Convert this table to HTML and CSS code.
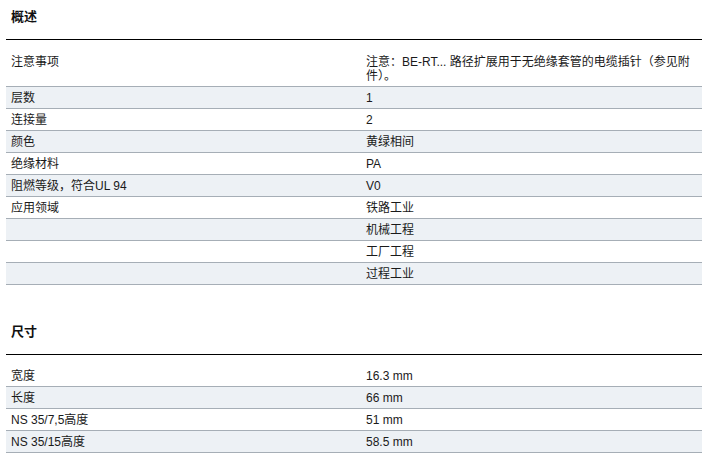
FILE: index.html
```html
<!DOCTYPE html>
<html lang="zh-CN">
<head>
<meta charset="utf-8">
<title>技术数据</title>
<link rel="stylesheet" href="styles.css">
</head>
<body>
<div class="page">
  <section class="section">
    <h2 class="section-title">概述</h2>
    <div class="table">
      <div class="row first">
        <div class="cell">注意事项</div>
        <div class="cell">注意：BE-RT... 路径扩展用于无绝缘套管的电缆插针（参见附件）。</div>
      </div>
      <div class="row alt"><div class="cell">层数</div><div class="cell">1</div></div>
      <div class="row"><div class="cell">连接量</div><div class="cell">2</div></div>
      <div class="row alt"><div class="cell">颜色</div><div class="cell">黄绿相间</div></div>
      <div class="row"><div class="cell">绝缘材料</div><div class="cell">PA</div></div>
      <div class="row alt"><div class="cell">阻燃等级，符合UL 94</div><div class="cell">V0</div></div>
      <div class="row"><div class="cell">应用领域</div><div class="cell">铁路工业</div></div>
      <div class="row alt"><div class="cell"></div><div class="cell">机械工程</div></div>
      <div class="row"><div class="cell"></div><div class="cell">工厂工程</div></div>
      <div class="row alt"><div class="cell"></div><div class="cell">过程工业</div></div>
    </div>
  </section>
  <section class="section second">
    <h2 class="section-title">尺寸</h2>
    <div class="table">
      <div class="row first"><div class="cell">宽度</div><div class="cell">16.3 mm</div></div>
      <div class="row alt"><div class="cell">长度</div><div class="cell">66 mm</div></div>
      <div class="row"><div class="cell">NS 35/7,5高度</div><div class="cell">51 mm</div></div>
      <div class="row alt"><div class="cell">NS 35/15高度</div><div class="cell">58.5 mm</div></div>
    </div>
  </section>
</div>
</body>
</html>
```

FILE: styles.css
```css
html, body {
  margin: 0;
  padding: 0;
  background: #ffffff;
}

body {
  font-family: "Liberation Sans", Arial, "Noto Sans CJK SC", sans-serif;
  font-size: 12px;
  color: #1a1a1a;
}

.page {
  padding-left: 6px;
}

.section-title {
  margin: 0;
  padding: 8px 5px 14px;
  font-size: 13px;
  line-height: 17px;
  font-weight: bold;
  color: #111111;
  border-bottom: 1px solid #000000;
}

.second {
  margin-top: 30px;
}

.table {
  display: flex;
  flex-direction: column;
}

.row {
  display: grid;
  grid-template-columns: 355px 1fr;
  border-bottom: 1px solid #a6aeb6;
  background: #ffffff;
}

.row.alt {
  background: #edf1f5;
}

.row.first {
  padding-top: 11px;
}

.second .row.first {
  padding-top: 10px;
}

.cell {
  padding: 4px 5px 3px;
  line-height: 14px;
  min-height: 14px;
}
```
